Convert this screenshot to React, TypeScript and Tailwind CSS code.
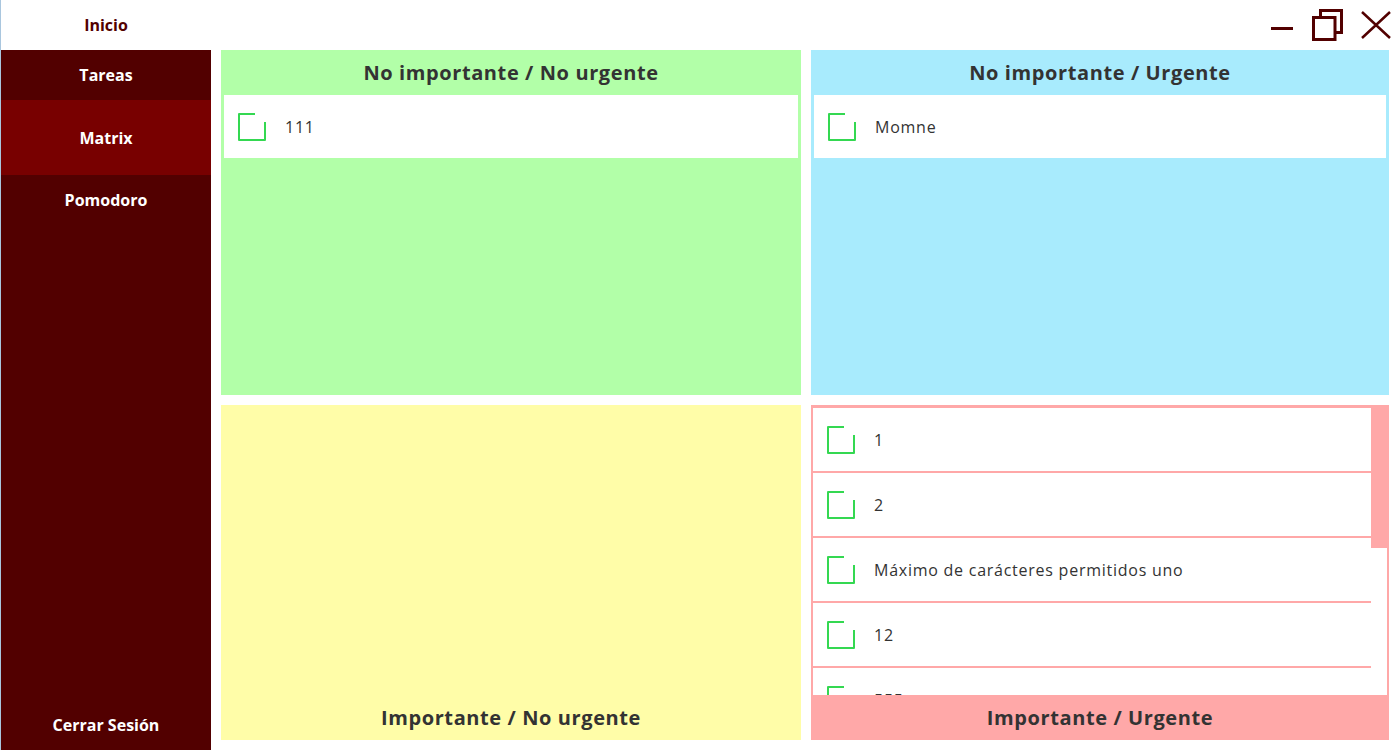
import React from "react";

const CheckIcon = () => (
  <svg width="30" height="30" viewBox="0 0 30 30" className="shrink-0">
    <path d="M18 2 H2 V28 H28 V10" fill="none" stroke="#34d851" strokeWidth="2" strokeLinejoin="round" />
  </svg>
);

function TaskItem({ text }: { text: string }) {
  return (
    <div className="flex items-center h-[63px] shrink-0 bg-white pl-[13px]">
      <CheckIcon />
      <span className="ml-[18px] text-[16px] tracking-[0.75px] text-[#333]">{text}</span>
    </div>
  );
}

function Header({ title }: { title: string }) {
  return (
    <div className="h-[45px] flex items-center justify-center text-[20px] tracking-[0.6px] font-bold text-[#333]">
      {title}
    </div>
  );
}

const urgent = ["1", "2", "Máximo de carácteres permitidos uno", "12", "555"];

export default function App() {
  return (
    <div className="w-[1400px] h-[750px] flex flex-col bg-white font-['Open_Sans','Noto_Sans',sans-serif] border-l border-[#a9c6de] overflow-hidden">
      {/* top bar */}
      <div className="h-[50px] flex items-center shrink-0">
        <div className="w-[210px] text-center text-[16px] font-bold text-[#520000]">Inicio</div>
        <div className="ml-auto flex items-center gap-[18px] pr-[9px]">
          <svg width="24" height="30" viewBox="0 0 24 30">
            <line x1="1" y1="18.5" x2="23" y2="18.5" stroke="#520000" strokeWidth="3" />
          </svg>
          <svg width="31" height="32" viewBox="0 0 31 32">
            <path d="M8.5 8 V1.5 H29.5 V23.5 H23" fill="none" stroke="#520000" strokeWidth="3" />
            <rect x="1.5" y="8.5" width="21.5" height="22" fill="none" stroke="#520000" strokeWidth="3" />
          </svg>
          <svg width="30" height="28" viewBox="0 0 30 28">
            <path d="M1 1 L29 27 M29 1 L1 27" stroke="#520000" strokeWidth="2.5" />
          </svg>
        </div>
      </div>

      <div className="flex flex-1 min-h-0">
        {/* sidebar */}
        <div className="w-[210px] shrink-0 bg-[#520000] flex flex-col text-white text-[16px] font-bold">
          <div className="h-[50px] flex items-center justify-center">Tareas</div>
          <div className="h-[75px] flex items-center justify-center bg-[#780000]">Matrix</div>
          <div className="h-[50px] flex items-center justify-center">Pomodoro</div>
          <div className="mt-auto h-[50px] flex items-center justify-center">Cerrar Sesión</div>
        </div>

        {/* matrix */}
        <div className="flex-1 grid grid-cols-[580px_578px] grid-rows-[345px_335px] gap-[10px] pl-[10px] pb-[10px]">
          <div className="bg-[#b2ffa8] flex flex-col px-[3px]">
            <Header title="No importante / No urgente" />
            <TaskItem text="111" />
          </div>
          <div className="bg-[#a8ebfd] flex flex-col px-[3px]">
            <Header title="No importante / Urgente" />
            <TaskItem text="Momne" />
          </div>
          <div className="bg-[#fffda8] flex flex-col justify-end">
            <Header title="Importante / No urgente" />
          </div>
          <div className="bg-[#ffa8a8] flex flex-col">
            <div className="flex flex-1 min-h-0 pl-[2px]">
              <div className="flex-1 flex flex-col gap-[2px] pt-[3px] overflow-hidden">
                {urgent.map((t) => (
                  <TaskItem key={t} text={t} />
                ))}
              </div>
              <div className="w-[18px] bg-white border-r-2 border-[#ffa8a8]">
                <div className="h-[143px] bg-[#ffa8a8]" />
              </div>
            </div>
            <Header title="Importante / Urgente" />
          </div>
        </div>
      </div>
    </div>
  );
}
